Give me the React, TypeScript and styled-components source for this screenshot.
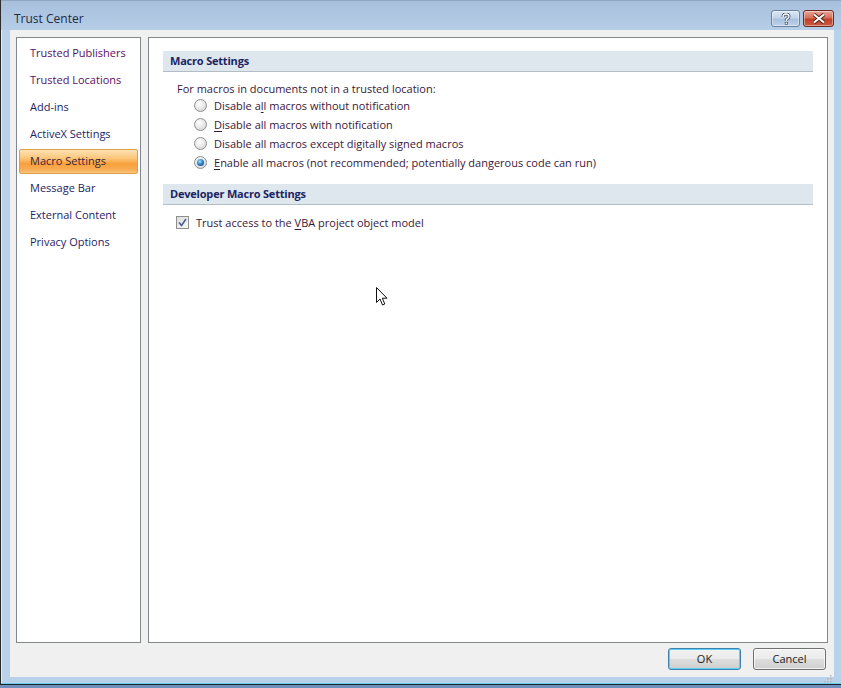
import React from "react";
import styled, { createGlobalStyle } from "styled-components";

const Global = createGlobalStyle`
  html, body { margin: 0; padding: 0; overflow: hidden; }
  body { font-family: "Open Sans", "Liberation Sans", sans-serif; }
`;

const Screen = styled.div`
  width: 841px;
  height: 688px;
  background: #6f8fbf;
  position: relative;
  overflow: hidden;
`;

const Window = styled.div`
  width: 846px;
  height: 685px;
  box-sizing: border-box;
  border-left: 1px solid #2b2b2b;
  border-bottom: 1px solid #222;
  box-shadow: inset 0 -1px 0 #66d0f0, inset 1px 0 0 #dfeaf6;
  background: #bad1ea;
  display: flex;
  flex-direction: column;
  padding: 0 12px 7px 9px;
`;

const TitleBar = styled.div`
  height: 30px;
  margin: 0 -12px 0 -9px;
  padding: 0 12px 0 13px;
  background: linear-gradient(#a7c0dc, #b6cde7);
  border-top: 1px solid #8fa7c4;
  box-sizing: border-box;
  display: flex;
  align-items: center;
`;

const Title = styled.div`
  flex: 1;
  font-size: 12px;
  color: #1b2b44;
  padding-top: 6px;
`;

const CaptionButton = styled.div<{ $close?: boolean }>`
  width: ${(p) => (p.$close ? 31 : 29)}px;
  height: 17px;
  margin-left: 3px;
  margin-top: 6px;
  box-sizing: border-box;
  border-radius: 3px;
  border: 1px solid ${(p) => (p.$close ? "#6b2a24" : "#6b83a3")};
  background: ${(p) =>
    p.$close
      ? "linear-gradient(#e9a596 0%, #d6705b 45%, #c0402a 55%, #cc5a42 100%)"
      : "linear-gradient(#dbe7f5 0%, #c2d4ea 45%, #a9c1de 55%, #bed2ea 100%)"};
  box-shadow: inset 0 0 0 1px rgba(255, 255, 255, 0.4);
  display: flex;
  align-items: center;
  justify-content: center;
`;

const Body = styled.div`
  flex: 1;
  background: #f0f0f0;
  display: flex;
  flex-direction: column;
  padding: 7px 6px 7px 6px;
  width: 824px;
  box-sizing: border-box;
  position: relative;
`;

const Panels = styled.div`
  flex: 1;
  display: flex;
  gap: 7px;
`;

const NavList = styled.div`
  width: 125px;
  box-sizing: border-box;
  border: 1px solid #828790;
  background: #fff;
  padding: 3px 2px;
  display: flex;
  flex-direction: column;
  gap: 2px;
`;

const NavItem = styled.div<{ $active?: boolean; $visited?: boolean }>`
  height: 25px;
  box-sizing: border-box;
  padding: 0 0 2px 10px;
  display: flex;
  align-items: center;
  font-size: 11px;
  border: 1px solid ${(p) => (p.$active ? "#dca04a" : "transparent")};
  border-radius: 2px;
  background: ${(p) =>
    p.$active
      ? "linear-gradient(#fde2b4 0%, #fcc77c 35%, #f8a03c 60%, #f9ad55 85%, #fcc680 100%)"
      : "transparent"};
  color: ${(p) => (p.$active ? "#3a1f3a" : p.$visited ? "#5a0f5f" : "#1c2463")};
`;

const Content = styled.div`
  flex: 1;
  box-sizing: border-box;
  border: 1px solid #828790;
  background: #fff;
  padding: 13px 14px 0 14px;
  display: flex;
  flex-direction: column;
  position: relative;
`;

const SectionHeader = styled.div<{ $gap: number }>`
  height: 21px;
  box-sizing: border-box;
  margin-top: ${(p) => p.$gap}px;
  background: #dee7ee;
  border-bottom: 1px solid #b4bcc4;
  padding: 0 0 2px 7px;
  display: flex;
  align-items: center;
  font-size: 11px;
  font-weight: 700;
  letter-spacing: -0.2px;
  color: #1b2462;
`;

const Intro = styled.div`
  margin-top: 7px;
  margin-left: 14px;
  height: 17px;
  line-height: 19px;
  font-size: 11px;
  color: #3a1838;
`;

const OptionRow = styled.label<{ $indent: number; $gap?: number }>`
  height: 19px;
  box-sizing: border-box;
  padding-bottom: 1px;
  margin-left: ${(p) => p.$indent}px;
  margin-top: ${(p) => p.$gap ?? 0}px;
  display: flex;
  align-items: center;
  gap: 7px;
  font-size: 11px;
  color: #3a1838;
  u { text-decoration: underline; text-underline-offset: 2px; }
`;

const Radio = styled.span<{ $on?: boolean }>`
  width: 13px;
  height: 13px;
  box-sizing: border-box;
  border-radius: 50%;
  border: 1px solid #8e8f8f;
  background: radial-gradient(circle at 40% 35%, #ffffff 0%, #e8e8e8 50%, #c8c8c8 100%);
  display: flex;
  align-items: center;
  justify-content: center;
  &::after {
    content: "";
    display: ${(p) => (p.$on ? "block" : "none")};
    width: 7px;
    height: 7px;
    border-radius: 50%;
    background: radial-gradient(circle at 40% 35%, #9fe0ff 0%, #2a7cc4 50%, #0d3468 100%);
  }
`;

const Check = styled.span`
  width: 13px;
  height: 13px;
  box-sizing: border-box;
  border: 1px solid #8e8f8f;
  background: linear-gradient(135deg, #dcdcdc, #fafafa);
  display: flex;
  align-items: center;
  justify-content: center;
`;

const Footer = styled.div`
  display: flex;
  justify-content: flex-end;
  gap: 12px;
  padding-top: 5px;
  padding-right: 2px;
`;

const Button = styled.div<{ $default?: boolean }>`
  width: 73px;
  height: 22px;
  box-sizing: border-box;
  padding-bottom: 1px;
  border-radius: 3px;
  border: 1px solid ${(p) => (p.$default ? "#3c7fb1" : "#707070")};
  background: linear-gradient(#f2f2f2 0%, #ebebeb 48%, #dddddd 52%, #cfcfcf 100%);
  box-shadow: ${(p) =>
    p.$default ? "inset 0 0 0 1px #5ed0f2" : "inset 0 0 0 1px rgba(255,255,255,0.7)"};
  display: flex;
  align-items: center;
  justify-content: center;
  font-size: 11px;
  color: #1a1a1a;
`;

const Grip = styled.div`
  position: absolute;
  right: 2px;
  bottom: 2px;
  width: 9px;
  height: 9px;
`;

const Cursor = styled.svg`
  position: absolute;
  left: 227px;
  top: 249px;
`;

const nav = [
  { label: "Trusted Publishers", visited: true },
  { label: "Trusted Locations", visited: true },
  { label: "Add-ins" },
  { label: "ActiveX Settings" },
  { label: "Macro Settings", active: true },
  { label: "Message Bar" },
  { label: "External Content" },
  { label: "Privacy Options" },
];

export default function App() {
  return (
    <Screen>
      <Global />
      <Window>
        <TitleBar>
          <Title>Trust Center</Title>
          <CaptionButton>
            <svg width="10" height="12" viewBox="0 0 10 12">
              <path
                d="M2 4 Q2 1 5 1 Q8 1 8 3.5 Q8 5 6 6 L5.3 7 L5.3 8"
                fill="none"
                stroke="#3b4a60"
                strokeWidth="3"
              />
              <rect x="3.8" y="9" width="3" height="2.6" fill="#3b4a60" />
              <path
                d="M2 4 Q2 1 5 1 Q8 1 8 3.5 Q8 5 6 6 L5.3 7 L5.3 8"
                fill="none"
                stroke="#fff"
                strokeWidth="1.4"
              />
              <rect x="4.5" y="9.6" width="1.6" height="1.4" fill="#fff" />
            </svg>
          </CaptionButton>
          <CaptionButton $close>
            <svg width="14" height="11" viewBox="0 0 14 11">
              <path d="M2 1.5 L12 9.5 M12 1.5 L2 9.5" stroke="#4a1a14" strokeWidth="3.6" />
              <path d="M2 1.5 L12 9.5 M12 1.5 L2 9.5" stroke="#fff" strokeWidth="2" />
            </svg>
          </CaptionButton>
        </TitleBar>
        <Body>
          <Panels>
            <NavList>
              {nav.map((n) => (
                <NavItem key={n.label} $active={n.active} $visited={n.visited}>
                  {n.label}
                </NavItem>
              ))}
            </NavList>
            <Content>
              <SectionHeader $gap={0}>Macro Settings</SectionHeader>
              <Intro>For macros in documents not in a trusted location:</Intro>
              <OptionRow $indent={31}>
                <Radio />
                <span>
                  Disable a<u>l</u>l macros without notification
                </span>
              </OptionRow>
              <OptionRow $indent={31}>
                <Radio />
                <span>
                  <u>D</u>isable all macros with notification
                </span>
              </OptionRow>
              <OptionRow $indent={31}>
                <Radio />
                <span>
                  Disable all macros except di<u>g</u>itally signed macros
                </span>
              </OptionRow>
              <OptionRow $indent={31}>
                <Radio $on />
                <span>
                  <u>E</u>nable all macros (not recommended; potentially dangerous code can run)
                </span>
              </OptionRow>
              <SectionHeader $gap={12}>Developer Macro Settings</SectionHeader>
              <OptionRow $indent={13} $gap={8}>
                <Check>
                  <svg width="9" height="9" viewBox="0 0 9 9">
                    <path d="M1 4.5 L3.5 7.5 L8 1" fill="none" stroke="#4a5f8f" strokeWidth="1.6" />
                  </svg>
                </Check>
                <span>
                  Trust access to the <u>V</u>BA project object model
                </span>
              </OptionRow>
              <Cursor width="12" height="20" viewBox="0 0 12 20">
                <path
                  d="M0.5 0.5 L0.5 15.5 L4 12 L6.5 18 L8.8 17 L6.3 11.2 L11 11.2 Z"
                  fill="#fff"
                  stroke="#111"
                  strokeWidth="1"
                  strokeLinejoin="round"
                />
              </Cursor>
            </Content>
          </Panels>
          <Footer>
            <Button $default>OK</Button>
            <Button>Cancel</Button>
          </Footer>
          <Grip>
            <svg width="9" height="9" viewBox="0 0 9 9">
              {[
                [7, 1],
                [7, 4],
                [4, 4],
                [7, 7],
                [4, 7],
                [1, 7],
              ].map(([x, y]) => (
                <rect key={`${x}-${y}`} x={x} y={y} width="1.5" height="1.5" fill="#b5b5b5" />
              ))}
            </svg>
          </Grip>
        </Body>
      </Window>
    </Screen>
  );
}
